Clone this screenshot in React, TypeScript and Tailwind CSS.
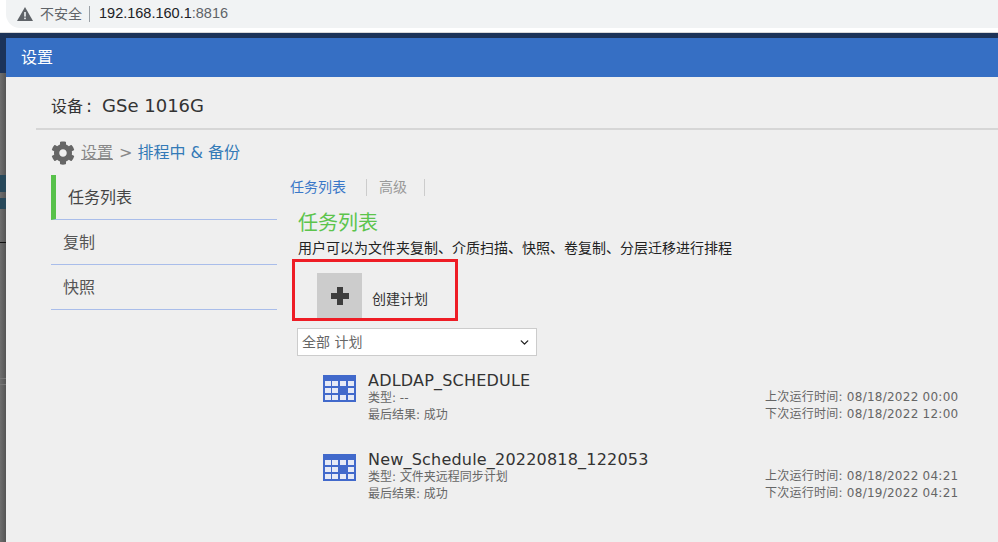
import React from 'react';
import { ChevronDown } from 'lucide-react';
import { FaCog } from 'react-icons/fa';

const font = "font-['DejaVu_Sans','Noto_Sans_CJK_SC',sans-serif]";

const schedules = [
  {
    name: 'ADLDAP_SCHEDULE',
    type: '--',
    result: '成功',
    last: '08/18/2022 00:00',
    next: '08/18/2022 12:00',
  },
  {
    name: 'New_Schedule_20220818_122053',
    type: '文件夹远程同步计划',
    result: '成功',
    last: '08/18/2022 04:21',
    next: '08/19/2022 04:21',
  },
];

const CalendarIcon = () => (
  <svg width="33" height="27" viewBox="0 0 33 27" className="shrink-0">
    <rect width="33" height="27" fill="#4169cb" />
    <g fill="#e6eaf6">
      {[6, 13, 20].map((y) =>
        [2, 9, 17, 25].map((x) => <rect key={`${x}-${y}`} x={x} y={y} width="6" height="5" />),
      )}
    </g>
    <rect x="15" y="11" width="9" height="8" fill="#4169cb" />
  </svg>
);

const WarningIcon = () => (
  <svg width="16" height="14" viewBox="0 0 16 14">
    <path fill="#5f6368" d="M8 0l8 14H0z" />
    <rect x="7.2" y="5" width="1.6" height="4.6" fill="#f1f3f4" />
    <rect x="7.2" y="10.6" width="1.6" height="1.6" fill="#f1f3f4" />
  </svg>
);

const PlusIcon = () => (
  <svg width="18" height="18" viewBox="0 0 18 18">
    <path fill="#3d3d3d" d="M6 0h6v6h6v6h-6v6H6v-6H0V6h6z" />
  </svg>
);

const SideItem = ({ label, active }: { label: string; active?: boolean }) => (
  <div
    className={`h-[45px] flex items-center border-b border-[#a9bdea] pt-[2px] text-[16px] ${
      active ? 'border-l-[5px] border-l-[#57c14a] pl-[12px] text-[#444]' : 'pl-[12px] text-[#555]'
    }`}
  >
    {label}
  </div>
);

export default function App() {
  return (
    <div className={`w-[998px] h-[542px] overflow-hidden flex flex-col bg-white ${font}`}>
      <div className="h-[33px] shrink-0 bg-white border-b border-[#d8d8d8]">
        <div className="h-[28px] bg-[#f1f3f4] rounded-bl-[14px] ml-[6px] flex items-center pl-[11px]">
          <WarningIcon />
          <span className="ml-[7px] text-[14px] text-[#5f6368]">不安全</span>
          <span className="ml-[7px] w-px h-[16px] bg-[#9aa0a6]" />
          <span className="ml-[9px] font-['Liberation_Sans',sans-serif] text-[14.5px] text-[#202124]">
            192.168.160.1<span className="text-[#5f6368]">:8816</span>
          </span>
        </div>
      </div>

      <div className="flex-1 flex min-h-0">
        {/* page behind the dialog, only a sliver shows */}
        <div className="w-[6px] shrink-0 flex flex-col bg-gradient-to-r from-[#6e6e6e] to-[#555555]">
          <div className="h-[40px] bg-[#1c3358]" />
          <div className="h-[102px]" />
          <div className="h-[17px] bg-[#27485a]" />
          <div className="h-[6px]" />
          <div className="h-[11px] bg-[#27485a]" />
          <div className="h-[33px]" />
          <div className="h-[1px] bg-[#111]" />
          <div className="h-[135px]" />
          <div className="h-[7px] border-y border-[#777]" />
        </div>
        <div className="flex-1 flex flex-col min-w-0 bg-[#efefef]">
          <div className="h-[5px] bg-[#1c3358] shrink-0" />
          <div className="h-[39px] shrink-0 bg-[#366fc4] flex items-center pl-[15px] text-[16px] text-white">
            设置
          </div>

          <div className="ml-[30px] h-[53px] shrink-0 border-b-2 border-[#d6d6d6] pl-[15px] pt-[17px] text-[16px] leading-[24px] text-[#333]">
            设备
            <span className="ml-[3px] text-[18px]">:</span>
            <span className="ml-[10px] text-[18px]">GSe 1016G</span>
          </div>

          <div className="flex items-center gap-[6px] ml-[45px] h-[40px] pt-[5px] shrink-0 text-[16px]">
            <FaCog size={24} color="#666666" />
            <span className="text-[#888] underline">设置</span>
            <span className="text-[#888]">&gt;</span>
            <span className="-ml-px text-[#337ab7]">排程中 &amp; 备份</span>
          </div>

          <div className="flex flex-1 min-h-0 ml-[45px] mt-[5px]">
            <div className="w-[226px] shrink-0">
              <SideItem label="任务列表" active />
              <SideItem label="复制" />
              <SideItem label="快照" />
            </div>

            <div className="flex-1 min-w-0 pl-[13px] flex flex-col">
              <div className="flex items-center h-[17px] mt-[4px] text-[14px]">
                <span className="text-[#3a78c8] pr-[20px] border-r border-[#ccc] h-full flex items-center">
                  任务列表
                </span>
                <span className="text-[#999] pl-[12px] pr-[17px] border-r border-[#ccc] h-full flex items-center">
                  高级
                </span>
              </div>

              <div className="ml-[8px] mt-[12px] text-[20px] leading-[30px] text-[#5cc44c]">任务列表</div>
              <div className="ml-[8px] mt-[1px] text-[14px] leading-[18px] text-[#222]">
                用户可以为文件夹复制、介质扫描、快照、卷复制、分层迁移进行排程
              </div>

              <div className="ml-[2px] mt-[2px] w-[166px] h-[62px] border-[3px] border-[#ee1c25] flex pl-[22px] pt-[11px]">
                <div className="w-[45px] h-[45px] bg-[#cccccc] flex items-center justify-center">
                  <PlusIcon />
                </div>
                <span className="ml-[10px] mt-[16px] text-[14px] leading-[20px] text-[#333]">创建计划</span>
              </div>

              <div className="ml-[7px] mt-[7px] w-[240px] h-[28px] border border-[#ccc] bg-white flex items-center justify-between pl-[4px] pr-[5px] text-[14px] text-[#666]">
                <span>全部 计划</span>
                <ChevronDown size={13} strokeWidth={2.5} color="#222" />
              </div>

              {schedules.map((s, i) => (
                <div key={s.name} className={`ml-[33px] flex ${i === 0 ? 'mt-[14px]' : 'mt-[25px]'}`}>
                  <div className="pt-[5px]">
                    <CalendarIcon />
                  </div>
                  <div className="ml-[12px] flex-1 min-w-0">
                    <div className="pt-[1px] text-[16px] leading-[19px] tracking-[0.2px] text-[#333]">{s.name}</div>
                    <div className="text-[12px] leading-[17px] text-[#666]">类型: {s.type}</div>
                    <div className="text-[12px] leading-[17px] text-[#666]">最后结果: {s.result}</div>
                  </div>
                  <div className="w-[233px] pt-[19px] shrink-0 text-[12px] leading-[17px] text-[#666] tracking-[0.25px]">
                    <div>上次运行时间: {s.last}</div>
                    <div>下次运行时间: {s.next}</div>
                  </div>
                </div>
              ))}
            </div>
          </div>
        </div>
      </div>
    </div>
  );
}
